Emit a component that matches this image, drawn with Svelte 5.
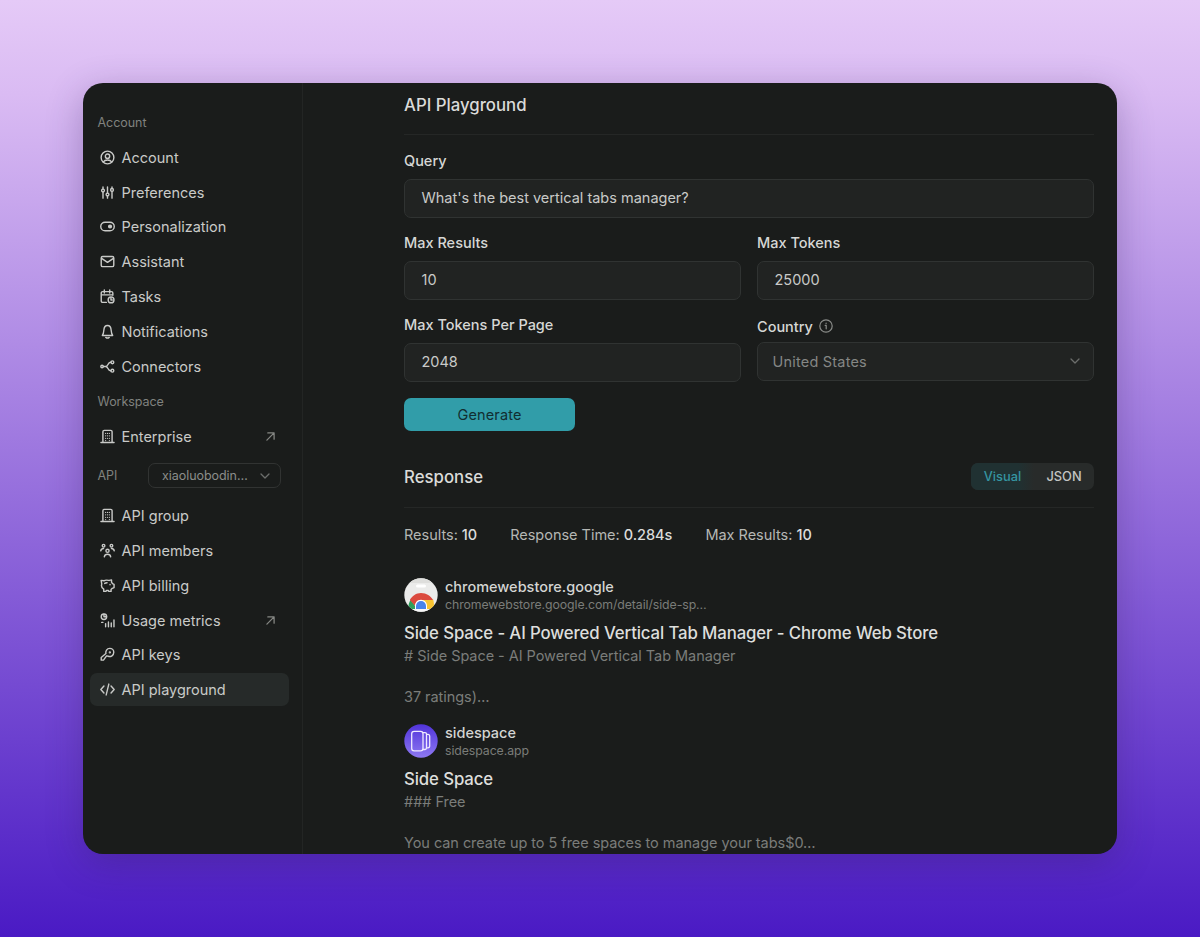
<script lang="ts">
  type Item = { label: string; icon: string; external?: boolean; active?: boolean };

  const account: Item[] = [
    { label: "Account", icon: "user" },
    { label: "Preferences", icon: "sliders" },
    { label: "Personalization", icon: "toggle" },
    { label: "Assistant", icon: "mail" },
    { label: "Tasks", icon: "tasks" },
    { label: "Notifications", icon: "bell" },
    { label: "Connectors", icon: "nodes" },
  ];
  const workspace: Item[] = [{ label: "Enterprise", icon: "building", external: true }];
  const api: Item[] = [
    { label: "API group", icon: "building" },
    { label: "API members", icon: "members" },
    { label: "API billing", icon: "piggy" },
    { label: "Usage metrics", icon: "metrics", external: true },
    { label: "API keys", icon: "key" },
    { label: "API playground", icon: "code", active: true },
  ];

  const stats = [
    { label: "Results:", value: "10" },
    { label: "Response Time:", value: "0.284s" },
    { label: "Max Results:", value: "10" },
  ];

  const results = [
    {
      site: "chromewebstore.google",
      url: "chromewebstore.google.com/detail/side-sp…",
      title: "Side Space - AI Powered Vertical Tab Manager - Chrome Web Store",
      text: "# Side Space - AI Powered Vertical Tab Manager\n\n37 ratings)…",
      logo: "chrome",
    },
    {
      site: "sidespace",
      url: "sidespace.app",
      title: "Side Space",
      text: "### Free\n\nYou can create up to 5 free spaces to manage your tabs$0…",
      logo: "sidespace",
    },
  ];
</script>

{#snippet icon(name: string)}
  <svg class="icon" viewBox="0 0 16 16" aria-hidden="true">
    {#if name === "user"}
      <circle cx="8" cy="8" r="6.8" />
      <circle cx="8" cy="6.6" r="2.3" />
      <path d="M3.6 12.6c1-1.5 2.6-2 4.4-2s3.4.5 4.4 2" />
    {:else if name === "sliders"}
      <path d="M3.2 2v2.200M3.200 7.600V14M8 2v6.400M8 11.800V14M12.800 2v1.600M12.800 7V14" />
      <circle cx="3.2" cy="5.9" r="1.5" />
      <circle cx="8" cy="10.2" r="1.5" />
      <circle cx="12.8" cy="5.3" r="1.5" />
    {:else if name === "toggle"}
      <rect x="0.8" y="3.4" width="14.4" height="9.2" rx="4.6" />
      <circle cx="10.7" cy="8" r="1.5" class="solid" />
    {:else if name === "mail"}
      <rect x="1.3" y="2.7" width="13.4" height="10.8" rx="1.6" />
      <path d="M1.7 4.6 8 8.900l6.300-4.300" />
    {:else if name === "tasks"}
      <path d="M6.800 14.300H2.800a1.500 1.500 0 0 1-1.500-1.500V4.300a1.500 1.500 0 0 1 1.500-1.500h9.400a1.500 1.500 0 0 1 1.500 1.500v2.400M1.300 6.300h12.400M4.600 1v3.200M10.400 1v3.200" />
      <circle cx="11.8" cy="11.6" r="3.1" />
      <path d="M11.700 9.900v1.900h1.400" />
    {:else if name === "bell"}
      <path d="M2.500 12.200h11c-1.200-1.600-1.400-3.200-1.600-5.600C11.700 3.600 10.200 1.600 8 1.600S4.300 3.600 4.100 6.600c-.2 2.400-.4 4-1.600 5.600Z" />
      <path d="M6.200 14.300c1 .8 2.600.8 3.600 0" />
    {:else if name === "nodes"}
      <circle cx="2.2" cy="8" r="1.3" />
      <circle cx="13.2" cy="3.5" r="1.5" />
      <circle cx="13.2" cy="12.5" r="1.5" />
      <path d="M3.600 8h2.400M11.700 3.500h-.5c-3.200 0-2.200 4.500-5.200 4.500 3 0 2 4.500 5.200 4.500h.5" />
    {:else if name === "building"}
      <path d="M1 14.400h14M3.100 14.400V3a1.500 1.500 0 0 1 1.500-1.500h6.800A1.500 1.500 0 0 1 12.900 3v11.400" />
      <path class="dots" d="M6 4.700h0M8 4.700h0M10 4.700h0M6 7.300h0M8 7.300h0M10 7.300h0M6 9.900h0M8 9.900h0M10 9.900h0M6 12.300h0M10 12.300h0" />
    {:else if name === "members"}
      <circle cx="3.8" cy="2.9" r="1.4" />
      <circle cx="12.2" cy="2.9" r="1.4" />
      <circle cx="8" cy="8.3" r="1.7" />
      <path d="M.8 8.300c.4-1.800 1.400-2.400 3-2.400M15.200 8.300c-.4-1.800-1.400-2.400-3-2.400M4.600 14.700c.3-2 1.600-2.700 3.400-2.700s3.100.7 3.400 2.700" />
    {:else if name === "piggy"}
      <path d="M1.900 6.500 1.200 2.500l3 .5c1.600-1.200 3.600-.7 5.600-.4L12.300 2v2.500l1 1.600 1.700.8v3.300l-1.900.8-1.300 1.300v2H9.400l-.4-1H6.800l-.5 1H4v-2.400C2 10.700 1.100 8.800 1.900 6.500Z" />
      <path d="M5 5.800c.7-.5 1.500-.7 2.500-.7M10.700 6.900v.4" />
    {:else if name === "metrics"}
      <circle cx="4.2" cy="4" r="2.9" />
      <path d="M4.200 1.200V4h2.700M6 14.600v-3.300M9 14.600V9.500M12 14.600v-4M14.900 14.600V7.500M1.800 10h1.300" />
    {:else if name === "key"}
      <path d="M7 9.500 3.700 14H1.300v-2.800L6.300 7c-.7-2.700 1.100-5.500 4.100-5.500 2.500 0 4.300 1.900 4.300 4.200 0 3.300-3.200 5.100-5.900 4.200Z" />
      <circle cx="10.500" cy="5.700" r=".5" class="solid" />
    {:else if name === "code"}
      <path d="M4.200 4.300.9 8l3.300 3.700M11.800 4.300 15.100 8l-3.300 3.700M9.400 2.200 6.600 13.800" />
    {/if}
  </svg>
{/snippet}

{#snippet chevron()}
  <svg class="chevron" viewBox="0 0 10 10" aria-hidden="true"><path d="m1 3 4 4 4-4" /></svg>
{/snippet}

{#snippet nav(items: Item[])}
  {#each items as item}
    <div class="row">
      <a class="item" class:active={item.active} href="#/">
        {@render icon(item.icon)}
        <span>{item.label}</span>
        {#if item.external}
          <svg class="external" viewBox="0 0 10 10" aria-hidden="true"><path d="M1 9 9 1M2 1h7v7" /></svg>
        {/if}
      </a>
    </div>
  {/each}
{/snippet}

<div class="stage">
  <div class="window">
    <aside>
      <div class="row heading">Account</div>
      {@render nav(account)}
      <div class="row heading">Workspace</div>
      {@render nav(workspace)}
      <div class="row heading picker">
        <span>API</span>
        <button class="org"><span>xiaoluobodin…</span>{@render chevron()}</button>
      </div>
      {@render nav(api)}
    </aside>

    <main>
      <h1>API Playground</h1>
      <form>
        <label class="wide">
          <span class="label">Query</span>
          <span class="field">What's the best vertical tabs manager?</span>
        </label>
        <label>
          <span class="label">Max Results</span>
          <span class="field">10</span>
        </label>
        <label>
          <span class="label">Max Tokens</span>
          <span class="field">25000</span>
        </label>
        <label>
          <span class="label">Max Tokens Per Page</span>
          <span class="field">2048</span>
        </label>
        <label class="country">
          <span class="label">
            Country
            <svg class="info" viewBox="0 0 14 14" aria-hidden="true">
              <circle cx="7" cy="7" r="6.2" />
              <path d="M6.200 6.400H7.200v3.400M7.100 4.200v.4" />
            </svg>
          </span>
          <span class="field select"><span>United States</span>{@render chevron()}</span>
        </label>
        <button class="generate" type="button">Generate</button>
      </form>

      <header>
        <h2>Response</h2>
        <div class="tabs">
          <span class="tab on">Visual</span>
          <span class="tab">JSON</span>
        </div>
      </header>

      <div class="stats">
        {#each stats as stat}
          <span>{stat.label} <b>{stat.value}</b></span>
        {/each}
      </div>

      {#each results as result}
        <article>
          <div class="source">
            {#if result.logo === "chrome"}
              <svg class="logo" viewBox="0 0 34 34" aria-hidden="true">
                <defs><clipPath id="disc"><circle cx="17" cy="17" r="16.7" /></clipPath></defs>
                <g clip-path="url(#disc)">
                  <path fill="#ebebea" d="M0 0h34v34H0z" />
                  <path fill="#dededc" d="M0 0h34v5H0z" />
                  <rect x="12" y="6.5" width="10" height="3" rx="1.5" fill="#fff" />
                  <path fill="#f7f7f7" d="M0 31h34v3H0z" />
                  <path fill="#2f9e5b" d="M4.200 31c0-4 .9-7 2.600-9.500L13 31Z" />
                  <path fill="#f7c331" d="M17 21.500h12.200c.8 3 1 6.500.6 9.500H17Z" />
                  <path fill="#db4a3e" d="M5.800 22C8.200 17.800 12.200 15 17 15c5.500 0 9.800 3 12 7H17c-3.500 0-5.500 2-5.800 6Z" />
                  <path fill="#fff" d="M11 31v-3c0-3.400 2.700-6.200 6-6.200s6 2.800 6 6.200v3Z" />
                  <path fill="#4883ea" d="M12 31v-3a5 5 0 0 1 10 0v3Z" />
                </g>
              </svg>
            {:else}
              <svg class="logo" viewBox="0 0 34 34" aria-hidden="true">
                <defs>
                  <linearGradient id="violet" x1="0" y1="0" x2="0" y2="1">
                    <stop offset="0" stop-color="#5134da" />
                    <stop offset="1" stop-color="#8d78f2" />
                  </linearGradient>
                </defs>
                <circle cx="17" cy="17" r="16.700" fill="url(#violet)" />
                <g class="panes">
                  <rect x="7.700" y="7.300" width="11.300" height="19.600" rx="2.400" />
                  <path d="M19 8.700h2.100q1.400 0 1.400 1.400v14q0 1.400-1.400 1.400H19M22.500 10.400h1.600q1.600.3 1.600 1.500v10.400q0 1.300-1.600 1.600h-1.600" />
                </g>
              </svg>
            {/if}
            <div class="names">
              <span class="site">{result.site}</span>
              <span class="url">{result.url}</span>
            </div>
          </div>
          <h3>{result.title}</h3>
          <p>{result.text}</p>
        </article>
      {/each}
    </main>
  </div>
</div>

<style>
  :global(body) {
    font-family: Inter, "Liberation Sans", sans-serif;
  }
  .stage {
    box-sizing: border-box;
    height: 937px;
    padding: 83px;
    background: linear-gradient(#e5caf7 0%, #dabbf3 10%, #4a1ac4 100%);
    overflow: hidden;
  }
  .window {
    display: flex;
    height: 771px;
    border-radius: 20px;
    background: #1a1c1b;
    color: #c9cac8;
    overflow: hidden;
    box-shadow: 0 9px 36px rgb(50 30 90 / 0.3);
  }
  svg {
    flex: none;
    fill: none;
    stroke: currentColor;
    stroke-linecap: round;
    stroke-linejoin: round;
  }
  button {
    font: inherit;
    letter-spacing: inherit;
  }

  aside {
    box-sizing: border-box;
    width: 220px;
    flex: none;
    padding: 21.9px 13px 0 6.5px;
    border-right: 1px solid #232524;
  }
  .row {
    display: flex;
    align-items: center;
    height: 34.86px;
  }
  .heading {
    padding-left: 8px;
    font-size: 12.5px;
    letter-spacing: -0.05px;
    color: #80827f;
  }
  .picker {
    height: 44.6px;
    justify-content: space-between;
    padding-right: 8px;
  }
  .org {
    display: flex;
    align-items: center;
    justify-content: space-between;
    box-sizing: border-box;
    width: 133px;
    height: 25px;
    padding: 0 10px 0 13px;
    border: 1px solid #313332;
    border-radius: 7px;
    background: none;
    color: #8b8d8a;
  }
  .item {
    display: flex;
    align-items: center;
    gap: 7px;
    box-sizing: border-box;
    width: 100%;
    height: 33px;
    padding: 0 14px 0 10px;
    border-radius: 7px;
    color: inherit;
    font-size: 14.5px;
    text-decoration: none;
  }
  .item.active {
    background: #262a29;
  }
  .icon {
    width: 15px;
    height: 15px;
    stroke-width: 1.5;
  }
  .icon .solid {
    fill: currentColor;
  }
  .icon .dots {
    stroke-width: 1.3;
  }
  .external {
    width: 9px;
    height: 9px;
    margin-left: auto;
    color: #858784;
    stroke-width: 1.4;
  }
  .chevron {
    width: 10px;
    height: 10px;
    color: #6c6e6c;
    stroke-width: 1.3;
  }

  main {
    width: 690px;
    margin-left: 101px;
    white-space: nowrap;
  }
  h1,
  h2,
  h3,
  p {
    margin: 0;
    font-weight: 500;
  }
  h1,
  h2 {
    font-size: 16.8px;
    color: #dadbd9;
  }
  h1 {
    height: 51px;
    border-bottom: 1px solid #252726;
    line-height: 45px;
  }
  form {
    display: grid;
    grid-template-columns: 337px 337px;
    column-gap: 16px;
    row-gap: 7px;
    padding-top: 8px;
  }
  label {
    height: 75px;
  }
  .wide,
  .generate {
    grid-column: 1 / -1;
  }
  .label {
    display: flex;
    align-items: center;
    gap: 6px;
    box-sizing: border-box;
    height: 36px;
    padding-bottom: 2px;
    font-size: 14.5px;
    font-weight: 500;
    color: #d6d7d5;
  }
  .field {
    display: flex;
    align-items: center;
    justify-content: space-between;
    box-sizing: border-box;
    height: 39px;
    padding: 0 17px 2px 16.5px;
    border: 1px solid #303332;
    border-radius: 7px;
    background: #212322;
    font-size: 14.5px;
  }
  .country .label {
    height: 35px;
    padding: 3px 0 0;
  }
  .select {
    padding: 0 13px 1px 14.5px;
    color: #858785;
    letter-spacing: 0.2px;
  }
  .info {
    width: 14px;
    height: 14px;
    color: #8a8c89;
    stroke-width: 1.2;
  }
  .generate {
    width: 171px;
    height: 33px;
    margin-top: 9px;
    padding: 0;
    border: 0;
    border-radius: 7px;
    background: #319da9;
    color: #112e31;
    font-size: 14.5px;
    letter-spacing: 0.15px;
  }

  header {
    display: flex;
    align-items: center;
    justify-content: space-between;
    box-sizing: border-box;
    height: 77px;
    padding-top: 15px;
    border-bottom: 1px solid #252726;
  }
  .tabs {
    display: flex;
    height: 27px;
    border-radius: 7px;
    background: #282b2a;
    overflow: hidden;
  }
  .tab {
    display: flex;
    align-items: center;
    justify-content: center;
    width: 60px;
    font-size: 12.8px;
    font-weight: 500;
    color: #c3c5c3;
  }
  .tab.on {
    width: 63px;
    background: linear-gradient(90deg, #203132 75%, #282b2a);
    color: #3595a1;
  }
  .stats {
    display: flex;
    gap: 33px;
    height: 70px;
    font-size: 14.5px;
    letter-spacing: -0.02px;
    line-height: 54px;
    color: #b5b7b4;
  }
  .stats b {
    font-weight: 500;
    color: #dcdddb;
  }

  article {
    height: 146px;
  }
  .source {
    display: flex;
    gap: 7px;
  }
  .logo {
    width: 34px;
    height: 34px;
    stroke: none;
  }
  .panes {
    stroke: #eee9ff;
    stroke-width: 1.3;
  }
  .names {
    display: grid;
    grid-template-rows: 17.5px 16px;
    line-height: 17px;
  }
  .site {
    font-size: 14.5px;
    font-weight: 500;
    color: #d4d5d3;
  }
  .url {
    font-size: 12.3px;
    letter-spacing: -0.08px;
    color: #7a7c79;
  }
  h3 {
    font-size: 16.8px;
    letter-spacing: -0.12px;
    line-height: 24px;
    padding-top: 9px;
    color: #dddedc;
  }
  p {
    padding-top: 0.6px;
    font-size: 14.5px;
    font-weight: 400;
    letter-spacing: -0.05px;
    line-height: 20.5px;
    white-space: pre;
    color: #7b7d7a;
  }
</style>
